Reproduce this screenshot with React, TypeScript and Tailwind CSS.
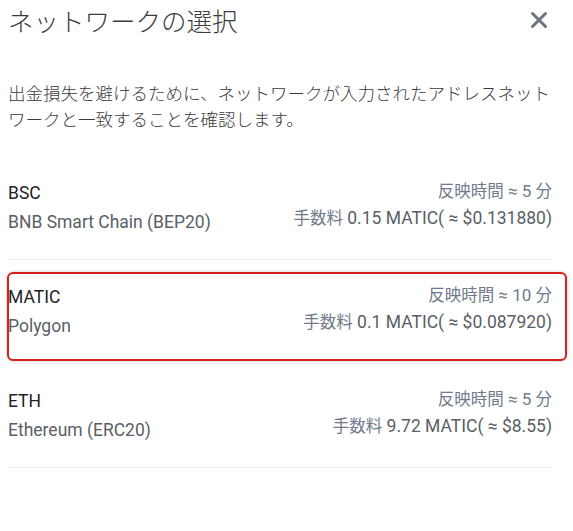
import React from "react";

const rows = [
  { code: "BSC", name: "BNB Smart Chain (BEP20)", time: "5", fee: "0.15 MATIC(", usd: "$0.131880)", hl: false },
  { code: "MATIC", name: "Polygon", time: "10", fee: "0.1 MATIC(", usd: "$0.087920)", hl: true },
  { code: "ETH", name: "Ethereum (ERC20)", time: "5", fee: "9.72 MATIC(", usd: "$8.55)", hl: false },
];

const latin = { fontFamily: '"Roboto", "Noto Sans CJK JP", sans-serif' };
const cjk = { fontFamily: '"Noto Sans CJK JP", sans-serif' };

export default function App() {
  return (
    <div className="w-[573px] h-[531px] bg-white overflow-hidden pl-[8px] pr-[21px]" style={cjk}>
      <div className="flex items-center justify-between h-[40px]">
        <h1 className="text-[25.5px] leading-[32px] text-[#3c3c3c] font-light">ネットワークの選択</h1>
        <svg width="18" height="18" viewBox="0 0 18 18" className="mr-[4px]">
          <path d="M2.5 2.5 L15.5 15.5 M15.5 2.5 L2.5 15.5" stroke="#6b7280" strokeWidth="3" strokeLinecap="round" />
        </svg>
      </div>
      <p className="mt-[40px] text-[17.5px] leading-[26px] text-[#3c3c3c] font-light">
        出金損失を避けるために、ネットワークが入力されたアドレスネットワークと一致することを確認します。
      </p>
      <div className="mt-[24px]">
        {rows.map((r) => (
          <div key={r.code} className="relative flex justify-between border-b border-[#f3f3f3] pt-[26px] pb-[26px]">
            {r.hl && (
              <div className="absolute left-[-1px] right-[-15px] top-[12px] bottom-[2px] border-2 border-[#d61f1f] rounded-[6px] shadow-[0_0_3px_rgba(0,0,0,0.25)] pointer-events-none" />
            )}
            <div className="flex flex-col gap-[7px]" style={latin}>
              <div className="text-[17.5px] leading-[22px] text-[#1e2329]">{r.code}</div>
              <div className="text-[17.5px] leading-[22px] text-[#5a5f66]">{r.name}</div>
            </div>
            <div className="flex flex-col items-end gap-[4px] mt-[-3px]">
              <div className="text-[17px] leading-[22px] text-[#707a8a] whitespace-nowrap">
                <span style={cjk} className="text-[16.5px]">反映時間</span>
                <span style={latin}> ≈ {r.time} </span>
                <span style={cjk} className="text-[16.5px]">分</span>
              </div>
              <div className="text-[17.5px] leading-[22px] text-[#5a5f66] whitespace-nowrap">
                <span style={cjk} className="text-[16.5px] text-[#707a8a]">手数料</span>
                <span style={latin}> {r.fee} ≈ {r.usd}</span>
              </div>
            </div>
          </div>
        ))}
      </div>
    </div>
  );
}
